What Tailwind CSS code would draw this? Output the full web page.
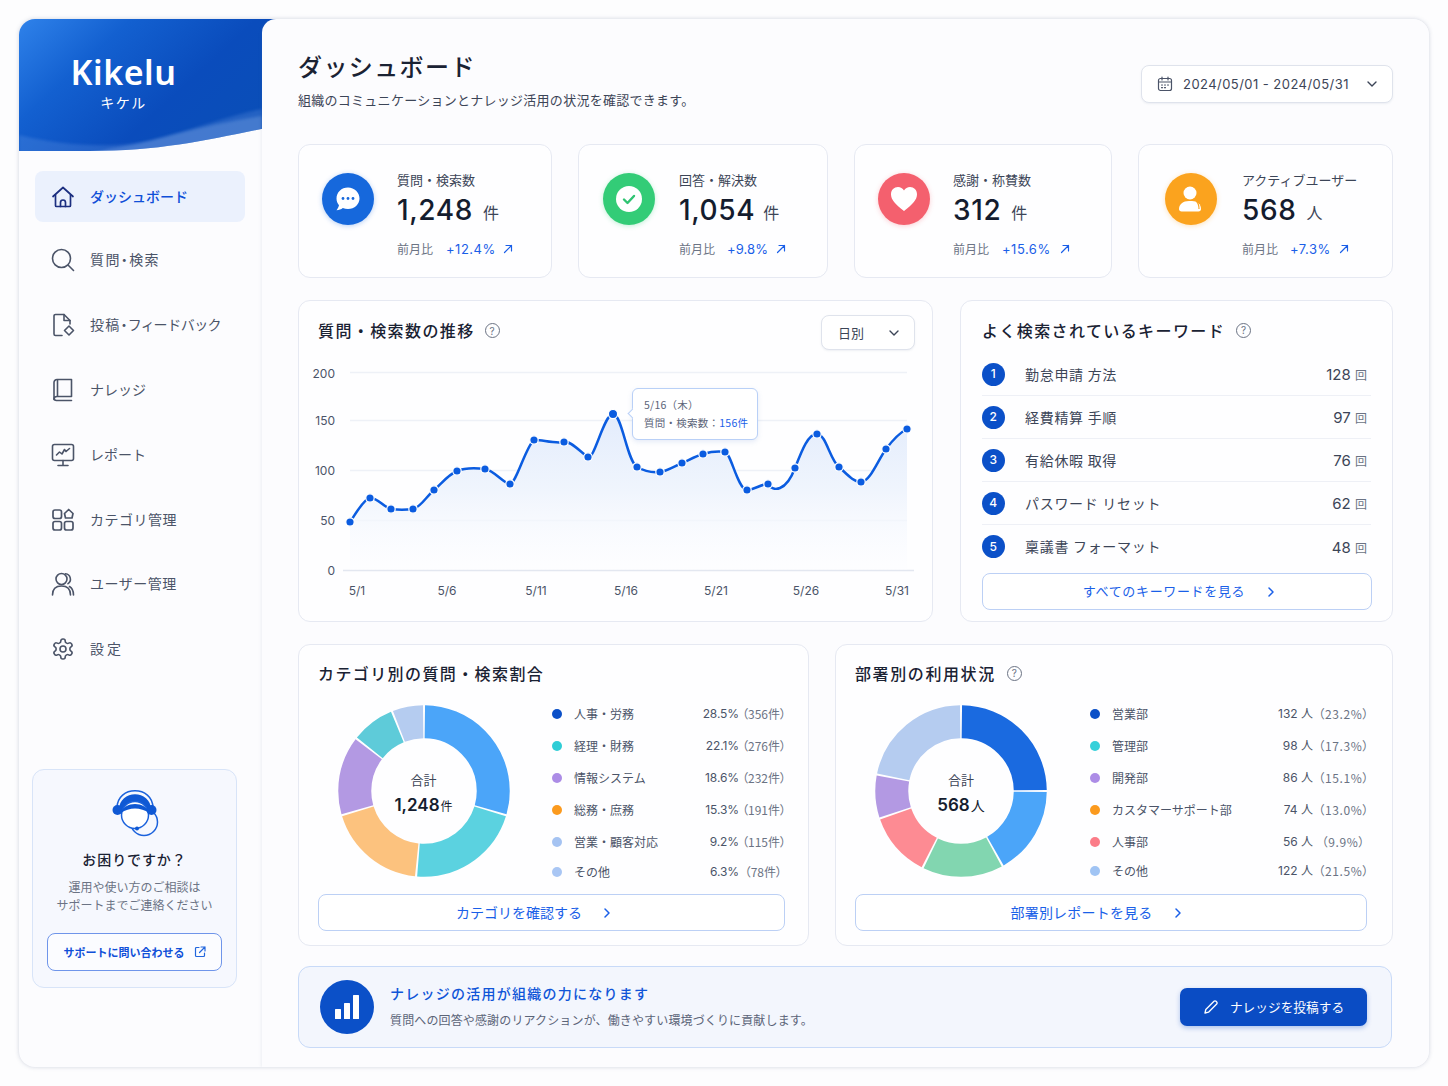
<!DOCTYPE html>
<html lang="ja">
<head>
<meta charset="utf-8">
<script src="https://cdn.jsdelivr.net/npm/@tailwindcss/browser@4"></script>
<title>Kikelu ダッシュボード</title>
</head>
<body class="bg-[#fdfdfe] font-['Inter','Noto_Sans_CJK_JP',sans-serif] text-[#1a2233]">
<div class="w-[1448px] h-[1086px] pt-[19px] pl-[19px] overflow-hidden">
<div class="relative flex w-[1410px] h-[1048px] rounded-[16px] bg-[#fcfcfe] overflow-hidden shadow-[0_0_4px_rgba(90,105,140,0.28)]">

  <!-- sidebar -->
  <aside class="relative w-[243px] shrink-0 flex flex-col">
    <div class="relative h-[134px] w-[243px] shrink-0">
      <svg class="absolute left-0 top-0" width="262" height="134" viewBox="0 0 262 134">
        <defs>
          <linearGradient id="hd" x1="0" y1="0" x2="1" y2="0.55">
            <stop offset="0" stop-color="#2f82ea"/>
            <stop offset="0.33" stop-color="#1360d0"/>
            <stop offset="0.7" stop-color="#0a4cbc"/>
            <stop offset="1" stop-color="#0a4eb8"/>
          </linearGradient>
          <clipPath id="hc"><path d="M0 0H262V106C200 118 150 132 70 132C40 132 20 132 0 132Z"/></clipPath>
        </defs>
        <path d="M0 0H262V106C200 118 150 132 70 132C40 132 20 132 0 132Z" fill="url(#hd)"/>
        <g clip-path="url(#hc)">
          <path class="blur-[1.5px]" d="M0 116C40 126 90 130 130 122C170 112 210 96 243 90V112C200 124 150 136 70 136C40 136 20 136 0 136Z" fill="#8db6ee" fill-opacity="0.2"/>
          <path class="blur-[1.5px]" d="M90 130C130 124 180 106 243 97V112C200 124 150 136 70 136Z" fill="#b6d0f4" fill-opacity="0.22"/>
        </g>
      </svg>
      <div class="absolute left-[52px] top-[33px] w-[105px] flex flex-col items-center text-white">
        <span class="text-[34px] leading-[40px] font-semibold font-['Noto_Sans',sans-serif] tracking-[0.5px]">Kikelu</span>
        <span class="text-[14px] leading-[16px] tracking-[1.5px] font-['Noto_Sans_CJK_JP',sans-serif] mt-[2px]">キケル</span>
      </div>
    </div>

    <nav class="flex flex-col px-[16px] pt-[18px] text-[14px] font-['Noto_Sans_CJK_JP',sans-serif] text-[#4b5468]">
      <a class="flex items-center h-[51px] w-[210px] rounded-[8px] bg-[#ebf1fd] pl-[16px] gap-[15px] text-[#0f4fd8] font-medium">
        <svg width="24" height="24" viewBox="0 0 24 24" fill="none" stroke="#1c2f80" stroke-width="1.7" stroke-linejoin="round" stroke-linecap="round"><path d="M2 11.5 12 2.5l10 9"/><path d="M4.5 10v10.5a1 1 0 0 0 1 1h13a1 1 0 0 0 1-1V10"/><path d="M9.5 21.5v-4a2.5 2.5 0 0 1 5 0v4"/></svg>
        <span>ダッシュボード</span>
      </a>
      <a class="flex items-center h-[53px] mt-[11px] pl-[16px] gap-[15px]">
        <svg width="24" height="24" viewBox="0 0 24 24" fill="none" stroke="#4b5468" stroke-width="1.6" stroke-linecap="round"><circle cx="10.5" cy="10.5" r="9"/><path d="m17.5 17.5 5 5"/></svg>
        <span class="[font-feature-settings:'palt'] tracking-[1.4px]">質問・検索</span>
      </a>
      <a class="flex items-center h-[53px] mt-[12px] pl-[16px] gap-[15px]">
        <svg width="24" height="24" viewBox="0 0 24 24" fill="none" stroke="#4b5468" stroke-width="1.6" stroke-linejoin="round" stroke-linecap="round"><path d="M11 22.5H4.5A1.5 1.5 0 0 1 3 21V3a1.5 1.5 0 0 1 1.5-1.5H13l6 6V11"/><path d="M13 1.5V7.5h6"/><path d="m18 13 4.5 4.5L18 22l-4.5-4.500Z"/></svg>
        <span class="[font-feature-settings:'palt'] tracking-[1.3px]">投稿・フィードバック</span>
      </a>
      <a class="flex items-center h-[53px] mt-[12px] pl-[16px] gap-[15px]">
        <svg width="24" height="24" viewBox="0 0 24 24" fill="none" stroke="#4b5468" stroke-width="1.6" stroke-linejoin="round" stroke-linecap="round"><path d="M6 1.5h14.5v17H6a3 3 0 0 0-3 3V4.5a3 3 0 0 1 3-3Z"/><path d="M3 20a2.5 2.5 0 0 0 2.5 2.5h15"/><path d="M6.5 2v16"/></svg>
        <span>ナレッジ</span>
      </a>
      <a class="flex items-center h-[53px] mt-[12px] pl-[16px] gap-[15px]">
        <svg width="24" height="24" viewBox="0 0 24 24" fill="none" stroke="#4b5468" stroke-width="1.6" stroke-linejoin="round" stroke-linecap="round"><rect x="1.5" y="1.5" width="21" height="16" rx="2"/><path d="M12 17.5v5M7 22.5h10"/><path d="m5.5 12 3-3 2.5 2 2.5-4.5 1.5 2 3.5-3"/></svg>
        <span>レポート</span>
      </a>
      <a class="flex items-center h-[53px] mt-[12px] pl-[16px] gap-[15px]">
        <svg width="24" height="24" viewBox="0 0 24 24" fill="none" stroke="#4b5468" stroke-width="1.7" stroke-linejoin="round"><rect x="2" y="2" width="8.5" height="8.5" rx="2"/><rect x="2" y="13.5" width="8.5" height="8.5" rx="2"/><rect x="13.5" y="13.5" width="8.5" height="8.5" rx="2"/><path d="M17.7 1.5 22 5.5l-1 4.5h-6.5l-1-4.5Z"/></svg>
        <span class="tracking-[0.5px]">カテゴリ管理</span>
      </a>
      <a class="flex items-center h-[53px] mt-[11px] pl-[16px] gap-[15px]">
        <svg width="24" height="24" viewBox="0 0 24 24" fill="none" stroke="#4b5468" stroke-width="1.6" stroke-linecap="round"><circle cx="10.5" cy="7" r="5.5"/><path d="M1.5 23c0-6 3.5-9 9-9s9 3 9 9"/><path d="M14.5 1.7a5.5 5.5 0 0 1 2.5 10"/><path d="M18.5 14.5c2.5 1.5 4 4.5 4 8.5"/></svg>
        <span class="tracking-[0.5px]">ユーザー管理</span>
      </a>
      <a class="flex items-center h-[53px] mt-[12px] pl-[16px] gap-[15px]">
        <svg width="24" height="24" viewBox="0 0 24 24" fill="none" stroke="#4b5468" stroke-width="1.6" stroke-linejoin="round"><path d="M12.22 2h-.44a2 2 0 0 0-2 2v.18a2 2 0 0 1-1 1.73l-.43.25a2 2 0 0 1-2 0l-.15-.08a2 2 0 0 0-2.73.73l-.22.38a2 2 0 0 0 .73 2.73l.15.1a2 2 0 0 1 1 1.72v.51a2 2 0 0 1-1 1.74l-.15.09a2 2 0 0 0-.73 2.73l.22.38a2 2 0 0 0 2.73.73l.15-.08a2 2 0 0 1 2 0l.43.25a2 2 0 0 1 1 1.73V20a2 2 0 0 0 2 2h.44a2 2 0 0 0 2-2v-.18a2 2 0 0 1 1-1.73l.43-.25a2 2 0 0 1 2 0l.15.08a2 2 0 0 0 2.73-.73l.22-.39a2 2 0 0 0-.73-2.73l-.15-.08a2 2 0 0 1-1-1.74v-.5a2 2 0 0 1 1-1.74l.15-.09a2 2 0 0 0 .73-2.73l-.22-.38a2 2 0 0 0-2.73-.73l-.15.08a2 2 0 0 1-2 0l-.43-.25a2 2 0 0 1-1-1.73V4a2 2 0 0 0-2-2z"/><circle cx="12" cy="12" r="3"/></svg>
        <span class="tracking-[3px]">設定</span>
      </a>
    </nav>

    <div class="absolute left-[13px] top-[750px] w-[205px] h-[219px] rounded-[12px] border border-[#d8e4f8] bg-[#f6f8fe] flex flex-col items-center font-['Noto_Sans_CJK_JP',sans-serif]">
      <svg class="mt-[12px]" width="60" height="60" viewBox="0 0 60 60" fill="none">
        <circle cx="39" cy="40" r="13.5" stroke="#1b62dc" stroke-width="1.5"/>
        <path d="M12 26C12 3 48 3 48 26" stroke="#1b62dc" stroke-width="1.5"/>
        <path d="M14 28C14 7 46 7 46 28Z" fill="#0f58d4"/>
        <circle cx="30" cy="33" r="13.5" fill="#fff" stroke="#1b62dc" stroke-width="1.5"/>
        <path d="M16 31C19 19 41 19 44 31C36 25 24 25 16 31Z" fill="#0f58d4"/>
        <circle cx="12.5" cy="28" r="5" fill="#0f58d4"/>
        <circle cx="46.5" cy="28" r="5" fill="#0f58d4"/>
        <circle cx="32" cy="46.5" r="2" fill="#0f58d4"/>
      </svg>
      <p class="text-[14px] leading-[20px] font-medium text-[#1a2233] mt-[7px] tracking-[0.9px]">お困りですか？</p>
      <p class="text-[12px] leading-[18px] text-[#6b7384] text-center mt-[9px]">運用や使い方のご相談は<br>サポートまでご連絡ください</p>
      <a class="flex items-center justify-center gap-[9px] w-[175px] h-[38px] mt-[19px] rounded-[8px] border border-[#6f95ea] bg-white/60 text-[11px] font-bold text-[#0f4fd8]">
        <span>サポートに問い合わせる</span>
        <svg width="12" height="12" viewBox="0 0 12 12" fill="none" stroke="#2266dd" stroke-width="1.2" stroke-linecap="round" stroke-linejoin="round"><path d="M5 1.5H2.5a1 1 0 0 0-1 1v7a1 1 0 0 0 1 1h7a1 1 0 0 0 1-1V7"/><path d="M7 1h4v4M11 1 5.5 6.5"/></svg>
      </a>
    </div>
  </aside>

  <!-- main -->
  <main class="relative z-10 flex-1 rounded-tl-[14px] bg-[#fcfcfe] pl-[36px] pr-[36px] shadow-[-1px_0_3px_rgba(110,125,160,0.10)] font-['Inter','Noto_Sans_CJK_JP',sans-serif]">
    <header class="h-[125px] flex justify-between">
      <div class="pt-[31px] font-['Noto_Sans_CJK_JP',sans-serif]">
        <h1 class="text-[24px] leading-[32px] font-medium tracking-[1.4px] text-[#1a2233]">ダッシュボード</h1>
        <p class="text-[13px] leading-[20px] mt-[8px] text-[#3c4557] tracking-[0.27px]">組織のコミュニケーションとナレッジ活用の状況を確認できます。</p>
      </div>
      <div class="mt-[46px] flex items-center w-[252px] h-[38px] rounded-[8px] border border-[#dfe3ec] bg-white shadow-[0_1px_2px_rgba(100,115,150,0.10)] pl-[15px] pr-[14px]">
        <svg width="16" height="16" viewBox="0 0 16 16" fill="none" stroke="#4b5468" stroke-width="1.2" stroke-linecap="round"><rect x="1.5" y="2.5" width="13" height="12" rx="2"/><path d="M1.5 6h13M5 1v3M11 1v3"/><path d="M4.5 9h1M7.5 9h1M10.5 9h1M4.5 11.7h1M7.5 11.7h1"/></svg>
        <span class="ml-[10px] mt-[2px] text-[13px] text-[#3c4557] whitespace-nowrap tracking-[0.45px]">2024/05/01 - 2024/05/31</span>
        <svg class="ml-auto" width="12" height="12" viewBox="0 0 12 12" fill="none" stroke="#3c4557" stroke-width="1.4" stroke-linecap="round" stroke-linejoin="round"><path d="m2 4 4 4 4-4"/></svg>
      </div>
    </header>

    <!-- stats -->
    <section class="grid grid-cols-[254px_250px_258px_255px] gap-x-[26px] h-[134px]">
      <div class="flex rounded-[12px] border border-[#e6e9f2] bg-white/70 pl-[23px] pt-[27px]">
        <span class="flex items-center justify-center size-[52px] rounded-full bg-[#1668dc] shadow-[0_1px_5px_rgba(22,104,220,0.3)] mt-[1px]">
          <svg width="28" height="28" viewBox="0 0 28 28"><path d="M14 2.5C7.5 2.5 2.5 7.3 2.5 13.5c0 2.6 1 5 2.5 6.8-.4 1.8-1.2 3.5-2.5 5 2.5-.2 4.7-1 6.3-2.3 1.6.7 3.3 1 5.2 1 6.5 0 11.5-4.7 11.5-10.5S20.5 2.5 14 2.5Z" fill="#fff"/><circle cx="9" cy="13.5" r="1.4" fill="#1668dc"/><circle cx="14" cy="13.5" r="1.4" fill="#1668dc"/><circle cx="19" cy="13.5" r="1.4" fill="#1668dc"/></svg>
        </span>
        <div class="ml-[23px]">
          <p class="text-[13px] leading-[16px] text-[#3c4557] font-['Noto_Sans_CJK_JP',sans-serif]">質問・検索数</p>
          <p class="mt-[5px] leading-[34px] flex items-baseline"><span class="text-[28px] font-medium text-[#141c2e] tracking-[0.6px]">1,248</span><span class="ml-[10px] -translate-y-[1px] text-[16px] text-[#3c4557] font-['Noto_Sans_CJK_JP',sans-serif]">件</span></p>
          <p class="mt-[11px] flex items-center text-[12px] leading-[16px] text-[#6b7384]"><span class="font-['Noto_Sans_CJK_JP',sans-serif]">前月比</span><span class="ml-[13px] text-[13px] text-[#1a5fe8] tracking-[0.5px]">+12.4%</span>
            <svg class="ml-[7px]" width="10" height="10" viewBox="0 0 10 10" fill="none" stroke="#1a5fe8" stroke-width="1.2" stroke-linecap="round" stroke-linejoin="round"><path d="M1.5 8.5 8.5 1.5M3 1.5h5.5V7"/></svg></p>
        </div>
      </div>
      <div class="flex rounded-[12px] border border-[#e6e9f2] bg-white/70 pl-[24px] pt-[27px]">
        <span class="flex items-center justify-center size-[52px] rounded-full bg-[#33cc77] shadow-[0_1px_5px_rgba(51,204,119,0.3)] mt-[1px]">
          <svg width="26" height="26" viewBox="0 0 26 26"><circle cx="13" cy="13" r="13" fill="#fff"/><path d="m8 13.5 3.5 3.5 6.5-7" fill="none" stroke="#2fc472" stroke-width="2.4" stroke-linecap="round" stroke-linejoin="round"/></svg>
        </span>
        <div class="ml-[24px]">
          <p class="text-[13px] leading-[16px] text-[#3c4557] font-['Noto_Sans_CJK_JP',sans-serif]">回答・解決数</p>
          <p class="mt-[5px] leading-[34px] flex items-baseline"><span class="text-[28px] font-medium text-[#141c2e] tracking-[0.6px]">1,054</span><span class="ml-[8px] -translate-y-[1px] text-[16px] text-[#3c4557] font-['Noto_Sans_CJK_JP',sans-serif]">件</span></p>
          <p class="mt-[11px] flex items-center text-[12px] leading-[16px] text-[#6b7384]"><span class="font-['Noto_Sans_CJK_JP',sans-serif]">前月比</span><span class="ml-[12px] text-[13px] text-[#1a5fe8] tracking-[0.1px]">+9.8%</span>
            <svg class="ml-[8px]" width="10" height="10" viewBox="0 0 10 10" fill="none" stroke="#1a5fe8" stroke-width="1.2" stroke-linecap="round" stroke-linejoin="round"><path d="M1.5 8.5 8.5 1.5M3 1.5h5.5V7"/></svg></p>
        </div>
      </div>
      <div class="flex rounded-[12px] border border-[#e6e9f2] bg-white/70 pl-[23px] pt-[27px]">
        <span class="flex items-center justify-center size-[52px] rounded-full bg-[#f4606e] shadow-[0_1px_5px_rgba(244,96,110,0.3)] mt-[1px]">
          <svg width="28" height="26" viewBox="0 0 28 26"><path d="M14 25C5 18 1 13.5 1 8.2 1 4 4.2 1 8 1c2.5 0 4.7 1.3 6 3.5C15.3 2.3 17.5 1 20 1c3.8 0 7 3 7 7.2C27 13.5 23 18 14 25Z" fill="#fff"/></svg>
        </span>
        <div class="ml-[23px]">
          <p class="text-[13px] leading-[16px] text-[#3c4557] font-['Noto_Sans_CJK_JP',sans-serif]">感謝・称賛数</p>
          <p class="mt-[5px] leading-[34px] flex items-baseline"><span class="text-[28px] font-medium text-[#141c2e] tracking-[0.6px]">312</span><span class="ml-[10px] -translate-y-[1px] text-[16px] text-[#3c4557] font-['Noto_Sans_CJK_JP',sans-serif]">件</span></p>
          <p class="mt-[11px] flex items-center text-[12px] leading-[16px] text-[#6b7384]"><span class="font-['Noto_Sans_CJK_JP',sans-serif]">前月比</span><span class="ml-[13px] text-[13px] text-[#1a5fe8] tracking-[0.5px]">+15.6%</span>
            <svg class="ml-[9px]" width="10" height="10" viewBox="0 0 10 10" fill="none" stroke="#1a5fe8" stroke-width="1.2" stroke-linecap="round" stroke-linejoin="round"><path d="M1.5 8.5 8.5 1.5M3 1.5h5.5V7"/></svg></p>
        </div>
      </div>
      <div class="flex rounded-[12px] border border-[#e6e9f2] bg-white/70 pl-[26px] pt-[27px]">
        <span class="flex items-center justify-center size-[52px] rounded-full bg-[#fba31e] shadow-[0_1px_5px_rgba(251,163,30,0.3)] mt-[1px]">
          <svg width="28" height="28" viewBox="0 0 28 28"><circle cx="13" cy="8" r="6.5" fill="#fff"/><path d="M2 24c0-4.5 4-8 10-8h3c5 0 9 3 9 8 0 1.5-1 2.5-2.5 2.5h-17C3 26.5 2 25.5 2 24Z" fill="#fff"/><path d="M19 16c2 1.5 3 4.5 3 8" stroke="#fba31e" stroke-width="1.2" fill="none"/></svg>
        </span>
        <div class="ml-[25px]">
          <p class="text-[13px] leading-[16px] text-[#3c4557] font-['Noto_Sans_CJK_JP',sans-serif]">アクティブユーザー</p>
          <p class="mt-[5px] leading-[34px] flex items-baseline"><span class="text-[28px] font-medium text-[#141c2e] tracking-[0.6px]">568</span><span class="ml-[10px] -translate-y-[1px] text-[16px] text-[#3c4557] font-['Noto_Sans_CJK_JP',sans-serif]">人</span></p>
          <p class="mt-[11px] flex items-center text-[12px] leading-[16px] text-[#6b7384]"><span class="font-['Noto_Sans_CJK_JP',sans-serif]">前月比</span><span class="ml-[12px] text-[13px] text-[#1a5fe8] tracking-[0.5px]">+7.3%</span>
            <svg class="ml-[8px]" width="10" height="10" viewBox="0 0 10 10" fill="none" stroke="#1a5fe8" stroke-width="1.2" stroke-linecap="round" stroke-linejoin="round"><path d="M1.5 8.5 8.5 1.5M3 1.5h5.5V7"/></svg></p>
        </div>
      </div>
    </section>

    <!-- chart + keywords -->
    <section class="grid grid-cols-[635px_433px] gap-x-[27px] mt-[22px] h-[322px]">
      <div class="relative rounded-[12px] border border-[#e6e9f2] bg-white/70">
        <div class="h-[59px] flex items-start pl-[19px] pr-[17px] pt-[13px] relative">
          <h2 class="text-[16px] leading-[32px] font-medium tracking-[1.4px] text-[#1a2233] font-['Noto_Sans_CJK_JP',sans-serif]">質問・検索数の推移</h2>
          <span class="ml-[10px] mt-[9px] flex items-center justify-center size-[15px] rounded-full border border-[#6b7384] text-[10px] leading-none text-[#6b7384]">?</span>
          <div class="ml-auto mt-[1px] flex items-center justify-between w-[94px] h-[35px] rounded-[8px] border border-[#dfe3ec] bg-white pl-[16px] pr-[14px] text-[13px] text-[#3c4557] font-['Noto_Sans_CJK_JP',sans-serif] shadow-[0_1px_2px_rgba(100,115,150,0.10)]">
            <span>日別</span>
            <svg width="12" height="12" viewBox="0 0 12 12" fill="none" stroke="#3c4557" stroke-width="1.4" stroke-linecap="round" stroke-linejoin="round"><path d="m2 4 4 4 4-4"/></svg>
          </div>
        </div>
        <svg class="block ml-[1px]" width="632" height="250" viewBox="300 360 632 250" font-family="Inter, 'Noto Sans CJK JP', sans-serif">
          <defs>
            <linearGradient id="ar" x1="0" y1="0" x2="0" y2="1">
              <stop offset="0" stop-color="#e3ecfc"/>
              <stop offset="0.5" stop-color="#f0f5fd"/>
              <stop offset="1" stop-color="#fafbff" stop-opacity="0.2"/>
            </linearGradient>
          </defs>
          <g stroke="#eef1f7" stroke-width="1.5">
            <path d="M350 372.5H907M350 420.5H907M350 470.5H907M350 520.5H907"/>
          </g>
          <path d="M343 570.5H914" stroke="#e3e7f0" stroke-width="1.5"/>
          <path fill="url(#ar)" d="M350 522C353.3 518 363 499 370 498C376.8 497 383.8 507.2 391 509C398 510 406 510 413 509C420 508 426.7 496.3 434 490C441.3 483.7 448.5 474.5 457 471C465.5 467.5 476.2 468 485 469C493.8 470 504 484 510 484C516 484 526 446 534 440C540 439 554 444 564 442C571 440.5 580 452 588 457C594 461 604 414 613 414C622 414 627 461 637 467C644 471 652 473 660 472C667 471 675 466 682 463C689 460 696 456 703 454C710 452 718 451 725 452C731 453 738 490 747 490C754 490 761 484 768 484C773 492 786 492 795 468C802 450 808 434 817 434C826 434 830 460 839 467C846 473 853 482 861 482C870 482 878 460 886 449C892 441 899 433 907 429V570H350Z"/>
          <path fill="none" stroke="#0b5ce0" stroke-width="2.5" stroke-linejoin="round" d="M350 522C353.3 518 363 499 370 498C376.8 497 383.8 507.2 391 509C398 510 406 510 413 509C420 508 426.7 496.3 434 490C441.3 483.7 448.5 474.5 457 471C465.5 467.5 476.2 468 485 469C493.8 470 504 484 510 484C516 484 526 446 534 440C540 439 554 444 564 442C571 440.5 580 452 588 457C594 461 604 414 613 414C622 414 627 461 637 467C644 471 652 473 660 472C667 471 675 466 682 463C689 460 696 456 703 454C710 452 718 451 725 452C731 453 738 490 747 490C754 490 761 484 768 484C773 492 786 492 795 468C802 450 808 434 817 434C826 434 830 460 839 467C846 473 853 482 861 482C870 482 878 460 886 449C892 441 899 433 907 429"/>
          <g fill="#0b5ce0" stroke="#fff" stroke-width="1.2">
            <circle cx="350" cy="522" r="4.2"/><circle cx="370" cy="498" r="4.2"/><circle cx="391" cy="509" r="4.2"/><circle cx="413" cy="509" r="4.2"/><circle cx="434" cy="490" r="4.2"/><circle cx="457" cy="471" r="4.2"/><circle cx="485" cy="469" r="4.2"/><circle cx="510" cy="484" r="4.2"/><circle cx="534" cy="440" r="4.2"/><circle cx="564" cy="442" r="4.2"/><circle cx="588" cy="457" r="4.2"/><circle cx="613" cy="414" r="4.6"/><circle cx="637" cy="467" r="4.2"/><circle cx="660" cy="472" r="4.2"/><circle cx="682" cy="463" r="4.2"/><circle cx="703" cy="454" r="4.2"/><circle cx="725" cy="452" r="4.2"/><circle cx="747" cy="490" r="4.2"/><circle cx="768" cy="484" r="4.2"/><circle cx="795" cy="468" r="4.2"/><circle cx="817" cy="434" r="4.2"/><circle cx="839" cy="467" r="4.2"/><circle cx="861" cy="482" r="4.2"/><circle cx="886" cy="449" r="4.2"/><circle cx="907" cy="429" r="4.2"/>
          </g>
          <g font-size="12" fill="#4b5468" text-anchor="end">
            <text x="335" y="378">200</text><text x="335" y="425">150</text><text x="335" y="475">100</text><text x="335" y="525">50</text><text x="335" y="575">0</text>
          </g>
          <g font-size="12" fill="#4b5468" text-anchor="middle">
            <text x="357" y="595">5/1</text><text x="447" y="595">5/6</text><text x="536" y="595">5/11</text><text x="626" y="595">5/16</text><text x="716" y="595">5/21</text><text x="806" y="595">5/26</text><text x="897" y="595">5/31</text>
          </g>
        </svg>
        <div class="absolute left-[333px] top-[87px] w-[126px] h-[52px] rounded-[6px] border border-[#b9d0f7] bg-white shadow-[0_2px_5px_rgba(90,125,200,0.15)] pl-[11px] pt-[7px] text-[10.5px] tracking-[0.25px] leading-[18px] text-[#5b6478] font-['Noto_Sans_CJK_JP',sans-serif]">
          <span class="absolute left-[-4px] top-[21px] size-[7px] rotate-45 bg-white border-l border-b border-[#b9d0f7]"></span>
          <p>5/16（木）</p>
          <p class="whitespace-nowrap">質問・検索数：<span class="text-[#1a5fe8]">156件</span></p>
        </div>
      </div>

      <div class="rounded-[12px] border border-[#e6e9f2] bg-white/70 px-[21px] pt-[13px] font-['Noto_Sans_CJK_JP',sans-serif]">
        <h2 class="flex items-center text-[16px] leading-[32px] font-medium tracking-[1.4px] text-[#1a2233]">よく検索されているキーワード<span class="ml-[11px] flex items-center justify-center size-[15px] rounded-full border border-[#6b7384] text-[10px] leading-none text-[#6b7384] font-['Inter',sans-serif] tracking-normal font-normal">?</span></h2>
        <ul class="mt-[7px] text-[14px] text-[#3c4557] tracking-[0.7px]">
          <li class="flex items-center h-[43px] border-b border-[#eef0f6]"><span class="flex items-center justify-center size-[23px] rounded-full bg-[#0b50c8] text-white text-[12px] font-['Inter',sans-serif] font-medium">1</span><span class="ml-[20px]">勤怠申請 方法</span><span class="ml-auto mr-[4px] mt-[3px] text-[15px] font-['Inter',sans-serif] tracking-normal">128 <span class="text-[12px] text-[#6b7384] font-['Noto_Sans_CJK_JP',sans-serif]">回</span></span></li>
          <li class="flex items-center h-[43px] border-b border-[#eef0f6]"><span class="flex items-center justify-center size-[23px] rounded-full bg-[#0b50c8] text-white text-[12px] font-['Inter',sans-serif] font-medium">2</span><span class="ml-[20px]">経費精算 手順</span><span class="ml-auto mr-[4px] mt-[3px] text-[15px] font-['Inter',sans-serif] tracking-normal">97 <span class="text-[12px] text-[#6b7384] font-['Noto_Sans_CJK_JP',sans-serif]">回</span></span></li>
          <li class="flex items-center h-[43px] border-b border-[#eef0f6]"><span class="flex items-center justify-center size-[23px] rounded-full bg-[#0b50c8] text-white text-[12px] font-['Inter',sans-serif] font-medium">3</span><span class="ml-[20px]">有給休暇 取得</span><span class="ml-auto mr-[4px] mt-[3px] text-[15px] font-['Inter',sans-serif] tracking-normal">76 <span class="text-[12px] text-[#6b7384] font-['Noto_Sans_CJK_JP',sans-serif]">回</span></span></li>
          <li class="flex items-center h-[43px] border-b border-[#eef0f6]"><span class="flex items-center justify-center size-[23px] rounded-full bg-[#0b50c8] text-white text-[12px] font-['Inter',sans-serif] font-medium">4</span><span class="ml-[20px]">パスワード リセット</span><span class="ml-auto mr-[4px] mt-[3px] text-[15px] font-['Inter',sans-serif] tracking-normal">62 <span class="text-[12px] text-[#6b7384] font-['Noto_Sans_CJK_JP',sans-serif]">回</span></span></li>
          <li class="flex items-center h-[43px]"><span class="flex items-center justify-center size-[23px] rounded-full bg-[#0b50c8] text-white text-[12px] font-['Inter',sans-serif] font-medium">5</span><span class="ml-[20px]">稟議書 フォーマット</span><span class="ml-auto mr-[4px] mt-[3px] text-[15px] font-['Inter',sans-serif] tracking-normal">48 <span class="text-[12px] text-[#6b7384] font-['Noto_Sans_CJK_JP',sans-serif]">回</span></span></li>
        </ul>
        <a class="mt-[5px] flex items-center justify-center gap-[22px] pl-[4px] w-[390px] h-[37px] rounded-[8px] border border-[#bcd0f5] bg-white text-[13px] leading-[32px] text-[#1a5fe8] tracking-[0.65px]">
          <span class="mt-[-2px]">すべてのキーワードを見る</span>
          <svg width="8" height="12" viewBox="0 0 8 12" fill="none" stroke="#1a5fe8" stroke-width="1.5" stroke-linecap="round" stroke-linejoin="round"><path d="m2 2 4 4-4 4"/></svg>
        </a>
      </div>
    </section>

    <!-- donuts -->
    <section class="grid grid-cols-[511px_558px] gap-x-[26px] mt-[22px] h-[302px] font-['Noto_Sans_CJK_JP',sans-serif]">
      <div class="rounded-[12px] border border-[#e6e9f2] bg-white/70 pl-[19px] pr-[23px] pt-[12px]">
        <h2 class="text-[16px] leading-[32px] font-medium tracking-[1.4px] text-[#1a2233]">カテゴリ別の質問・検索割合</h2>
        <div class="flex mt-[14px] h-[176px]">
          <div class="relative ml-[17.5px] size-[176px] shrink-0">
            <svg width="176" height="176" viewBox="0 0 176 176" fill="none" stroke-width="33" class="-rotate-90">
              <circle cx="88" cy="88" r="69.25" pathLength="100" stroke="#4ba5f9" stroke-dasharray="29.2 100" stroke-dashoffset="-0.2"/>
              <circle cx="88" cy="88" r="69.25" pathLength="100" stroke="#5bd2e0" stroke-dasharray="21.5 100" stroke-dashoffset="-29.8"/>
              <circle cx="88" cy="88" r="69.25" pathLength="100" stroke="#fcc27e" stroke-dasharray="18.5 100" stroke-dashoffset="-51.7"/>
              <circle cx="88" cy="88" r="69.25" pathLength="100" stroke="#b399e3" stroke-dasharray="14.7 100" stroke-dashoffset="-70.6"/>
              <circle cx="88" cy="88" r="69.25" pathLength="100" stroke="#5ecbd9" stroke-dasharray="8 100" stroke-dashoffset="-85.7"/>
              <circle cx="88" cy="88" r="69.25" pathLength="100" stroke="#b5ccf0" stroke-dasharray="5.7 100" stroke-dashoffset="-94.1"/>
            </svg>
            <div class="absolute inset-0 flex flex-col items-center justify-center pt-[7px]">
              <span class="text-[13px] leading-[18px] text-[#3c4557]">合計</span>
              <span class="leading-[26px] mt-[2px] text-[#141c2e]"><span class="text-[17px] font-semibold font-['Inter',sans-serif]">1,248</span><span class="text-[12px] ml-[1px]">件</span></span>
            </div>
          </div>
          <div class="ml-[40.5px] mr-[-1px] flex-1 mt-[-5px] text-[12px] text-[#4b5468]">
            <div class="flex items-center h-[32px]"><span class="size-[10px] rounded-full bg-[#0b50c8]"></span><span class="ml-[12px]">人事・労務</span><span class="ml-auto font-['Inter',sans-serif] tracking-[-0.1px]">28.5%</span><span class="w-[47px] text-right text-[#6b7384] [font-feature-settings:'palt'] whitespace-nowrap">（356件）</span></div>
            <div class="flex items-center h-[32px]"><span class="size-[10px] rounded-full bg-[#2fcdd6]"></span><span class="ml-[12px]">経理・財務</span><span class="ml-auto font-['Inter',sans-serif] tracking-[-0.1px]">22.1%</span><span class="w-[47px] text-right text-[#6b7384] [font-feature-settings:'palt'] whitespace-nowrap">（276件）</span></div>
            <div class="flex items-center h-[32px]"><span class="size-[10px] rounded-full bg-[#ac8ce6]"></span><span class="ml-[12px]">情報システム</span><span class="ml-auto font-['Inter',sans-serif] tracking-[-0.1px]">18.6%</span><span class="w-[47px] text-right text-[#6b7384] [font-feature-settings:'palt'] whitespace-nowrap">（232件）</span></div>
            <div class="flex items-center h-[32px]"><span class="size-[10px] rounded-full bg-[#fb9a1e]"></span><span class="ml-[12px]">総務・庶務</span><span class="ml-auto font-['Inter',sans-serif] tracking-[-0.1px]">15.3%</span><span class="w-[47px] text-right text-[#6b7384] [font-feature-settings:'palt'] whitespace-nowrap">（191件）</span></div>
            <div class="flex items-center h-[32px]"><span class="size-[10px] rounded-full bg-[#a5c3f2]"></span><span class="ml-[12px]">営業・顧客対応</span><span class="ml-auto font-['Inter',sans-serif] tracking-[-0.1px]">9.2%</span><span class="w-[47px] text-right text-[#6b7384] [font-feature-settings:'palt'] whitespace-nowrap">（115件）</span></div>
            <div class="flex items-center h-[28px]"><span class="size-[10px] rounded-full bg-[#a9c6f4]"></span><span class="ml-[12px]">その他</span><span class="ml-auto font-['Inter',sans-serif] tracking-[-0.1px]">6.3%</span><span class="w-[47px] text-right pr-[4px] text-[#6b7384] [font-feature-settings:'palt'] whitespace-nowrap">（78件）</span></div>
          </div>
        </div>
        <a class="mt-[15px] flex items-center justify-center gap-[21px] pr-[36px] h-[37px] rounded-[8px] border border-[#bcd0f5] bg-white text-[14px] text-[#1a5fe8]">
          <span>カテゴリを確認する</span>
          <svg width="8" height="12" viewBox="0 0 8 12" fill="none" stroke="#1a5fe8" stroke-width="1.5" stroke-linecap="round" stroke-linejoin="round"><path d="m2 2 4 4-4 4"/></svg>
        </a>
      </div>

      <div class="rounded-[12px] border border-[#e6e9f2] bg-white/70 pl-[19px] pr-[25px] pt-[12px]">
        <h2 class="flex items-center text-[16px] leading-[32px] font-medium tracking-[1.6px] text-[#1a2233]">部署別の利用状況<span class="ml-[11px] flex items-center justify-center size-[15px] rounded-full border border-[#6b7384] text-[10px] leading-none text-[#6b7384] font-['Inter',sans-serif] tracking-normal font-normal">?</span></h2>
        <div class="flex mt-[14px] h-[176px]">
          <div class="relative ml-[18px] size-[176px] shrink-0">
            <svg width="176" height="176" viewBox="0 0 176 176" fill="none" stroke-width="33" class="-rotate-90">
              <circle cx="88" cy="88" r="69.25" pathLength="100" stroke="#1a6ae0" stroke-dasharray="24.6 100" stroke-dashoffset="-0.2"/>
              <circle cx="88" cy="88" r="69.25" pathLength="100" stroke="#4ba5f9" stroke-dasharray="16.5 100" stroke-dashoffset="-25.2"/>
              <circle cx="88" cy="88" r="69.25" pathLength="100" stroke="#82d6b0" stroke-dasharray="15.1 100" stroke-dashoffset="-42.1"/>
              <circle cx="88" cy="88" r="69.25" pathLength="100" stroke="#fd8b93" stroke-dasharray="12 100" stroke-dashoffset="-57.6"/>
              <circle cx="88" cy="88" r="69.25" pathLength="100" stroke="#b399e3" stroke-dasharray="7.9 100" stroke-dashoffset="-70"/>
              <circle cx="88" cy="88" r="69.25" pathLength="100" stroke="#b5ccf0" stroke-dasharray="21.5 100" stroke-dashoffset="-78.3"/>
            </svg>
            <div class="absolute inset-0 flex flex-col items-center justify-center pt-[7px]">
              <span class="text-[13px] leading-[18px] text-[#3c4557]">合計</span>
              <span class="leading-[26px] mt-[2px] text-[#141c2e]"><span class="text-[17px] font-semibold font-['Inter',sans-serif]">568</span><span class="text-[14px] ml-[1px]">人</span></span>
            </div>
          </div>
          <div class="ml-[41px] mr-[-2px] flex-1 mt-[-5px] text-[12px] text-[#4b5468]">
            <div class="flex items-center h-[32px]"><span class="size-[10px] rounded-full bg-[#0b50c8]"></span><span class="ml-[12px]">営業部</span><span class="ml-auto font-['Inter','Noto_Sans_CJK_JP',sans-serif]">132 人</span><span class="w-[56px] text-right text-[#6b7384] [font-feature-settings:'palt'] tracking-[0.6px] whitespace-nowrap">（23.2%）</span></div>
            <div class="flex items-center h-[32px]"><span class="size-[10px] rounded-full bg-[#36d0da]"></span><span class="ml-[12px]">管理部</span><span class="ml-auto font-['Inter','Noto_Sans_CJK_JP',sans-serif]">98 人</span><span class="w-[56px] text-right text-[#6b7384] [font-feature-settings:'palt'] tracking-[0.6px] whitespace-nowrap">（17.3%）</span></div>
            <div class="flex items-center h-[32px]"><span class="size-[10px] rounded-full bg-[#ac8ce6]"></span><span class="ml-[12px]">開発部</span><span class="ml-auto font-['Inter','Noto_Sans_CJK_JP',sans-serif]">86 人</span><span class="w-[56px] text-right text-[#6b7384] [font-feature-settings:'palt'] tracking-[0.6px] whitespace-nowrap">（15.1%）</span></div>
            <div class="flex items-center h-[32px]"><span class="size-[10px] rounded-full bg-[#fb9a1e]"></span><span class="ml-[12px]">カスタマーサポート部</span><span class="ml-auto font-['Inter','Noto_Sans_CJK_JP',sans-serif]">74 人</span><span class="w-[56px] text-right text-[#6b7384] [font-feature-settings:'palt'] tracking-[0.6px] whitespace-nowrap">（13.0%）</span></div>
            <div class="flex items-center h-[31px]"><span class="size-[10px] rounded-full bg-[#fb7c88]"></span><span class="ml-[12px]">人事部</span><span class="ml-auto font-['Inter','Noto_Sans_CJK_JP',sans-serif]">56 人</span><span class="w-[56px] text-right pr-[4px] text-[#6b7384] [font-feature-settings:'palt'] tracking-[0.6px] whitespace-nowrap">（9.9%）</span></div>
            <div class="flex items-center h-[27px]"><span class="size-[10px] rounded-full bg-[#a0c4f4]"></span><span class="ml-[12px]">その他</span><span class="ml-auto font-['Inter','Noto_Sans_CJK_JP',sans-serif]">122 人</span><span class="w-[56px] text-right text-[#6b7384] [font-feature-settings:'palt'] tracking-[0.6px] whitespace-nowrap">（21.5%）</span></div>
          </div>
        </div>
        <a class="mt-[15px] flex items-center justify-center gap-[21px] pr-[30px] h-[37px] rounded-[8px] border border-[#bcd0f5] bg-white text-[14px] tracking-[0.2px] text-[#1a5fe8]">
          <span>部署別レポートを見る</span>
          <svg width="8" height="12" viewBox="0 0 8 12" fill="none" stroke="#1a5fe8" stroke-width="1.5" stroke-linecap="round" stroke-linejoin="round"><path d="m2 2 4 4-4 4"/></svg>
        </a>
      </div>
    </section>

    <!-- banner -->
    <section class="mt-[20px] h-[82px] w-[1094px] flex items-center rounded-[12px] border border-[#c8daf8] bg-[#f3f6fd] pl-[21px] pr-[24px] font-['Noto_Sans_CJK_JP',sans-serif]">
      <span class="flex items-center justify-center size-[54px] rounded-full bg-[#0b50c8] shrink-0">
        <svg width="26" height="24" viewBox="0 0 26 24" fill="#fff"><rect x="1" y="14" width="6" height="10" rx="0.5"/><rect x="10" y="8" width="6" height="16" rx="0.5"/><rect x="19" y="0" width="6" height="24" rx="0.5"/></svg>
      </span>
      <div class="ml-[16px] mt-[-3px]">
        <p class="text-[14px] leading-[20px] font-medium tracking-[1.25px] text-[#1055d8]">ナレッジの活用が組織の力になります</p>
        <p class="text-[12px] leading-[18px] mt-[8px] text-[#5b6478] tracking-[0.14px]">質問への回答や感謝のリアクションが、働きやすい環境づくりに貢献します。</p>
      </div>
      <a class="ml-auto flex items-center justify-center gap-[11px] w-[187px] h-[38px] rounded-[7px] bg-[#0a4cc4] text-white text-[12.7px] shadow-[0_2px_5px_rgba(10,76,196,0.3)]">
        <svg width="16" height="16" viewBox="0 0 16 16" fill="none" stroke="#fff" stroke-width="1.3" stroke-linejoin="round" stroke-linecap="round"><path d="M2 14l.8-3.5L11 2.3a1.4 1.4 0 0 1 2 0l.7.7a1.4 1.4 0 0 1 0 2L5.5 13.2Z"/></svg>
        <span>ナレッジを投稿する</span>
      </a>
    </section>
  </main>
</div>
</div>
</body>
</html>
